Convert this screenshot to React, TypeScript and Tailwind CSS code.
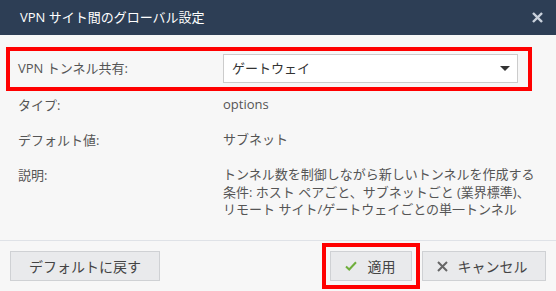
import React from 'react';

const font = { fontFamily: '"Open Sans", "Noto Sans CJK JP", sans-serif' };

const rows = [
  { label: 'タイプ:', value: ['options'] },
  { label: 'デフォルト値:', value: ['サブネット'] },
  {
    label: '説明:',
    value: [
      'トンネル数を制御しながら新しいトンネルを作成する',
      '条件: ホスト ペアごと、サブネットごと (業界標準)、',
      'リモート サイト/ゲートウェイごとの単一トンネル',
    ],
  },
];

export default function App() {
  return (
    <div className="w-[556px] h-[291px] bg-[#f7f7f7] flex flex-col overflow-hidden" style={font}>
      <div className="h-[35px] bg-[#2d3e55] flex items-center justify-between pl-5 pr-[13px] shrink-0">
        <span className="text-white text-[13px]">VPN サイト間のグローバル設定</span>
        <svg className="w-[11px] h-[11px] text-[#c9d1dc]" viewBox="0 0 12 12" fill="none" stroke="currentColor">
          <path d="M2 2l8 8M10 2l-8 8" strokeWidth={2.6} strokeLinecap="square" />
        </svg>
      </div>

      <div className="flex flex-col pl-[6px] pr-[24px] pt-[12px]">
        <div className="border-4 border-[#ff0000] flex items-center h-[44px] pl-2 pr-[10px] pb-[1px]">
          <span className="w-[205px] text-[13px] text-[#555]">VPN トンネル共有:</span>
          <div className="flex-1 h-[29px] bg-white border border-[#ccc] flex items-center justify-between pl-[8px] pr-[7px]">
            <span className="text-[13px] text-[#333]">ゲートウェイ</span>
            <svg className="w-[10px] h-[5px] text-[#333]" viewBox="0 0 10 5" fill="currentColor">
              <path d="M0 0h10L5 5z" />
            </svg>
          </div>
        </div>
      </div>

      <div className="flex flex-col gap-[17px] pl-[18px] pt-[5px] h-[149px]">
        {rows.map((r) => (
          <div key={r.label} className="flex text-[13px] leading-[18px] text-[#555]">
            <span className="w-[205px] shrink-0">{r.label}</span>
            <div className="flex flex-col leading-[17.5px]">
              {r.value.map((v) => (
                <span key={v}>{v}</span>
              ))}
            </div>
          </div>
        ))}
      </div>

      <div className="h-px bg-[#dfe2e7]" />

      <div className="flex items-center justify-between px-[10px] pt-[10px]">
        <button className="w-[150px] h-[30px] bg-[#e9eaec] border border-[#cfd1d4] text-[14px] text-[#444]">
          デフォルトに戻す
        </button>
        <div className="flex gap-[10px]">
          <div className="relative">
            <div className="absolute -inset-2 border-4 border-[#ff0000]" />
            <button className="w-[82px] h-[30px] bg-[#e9eaec] border border-[#cfd1d4] text-[14px] text-[#444] flex items-center justify-center gap-[11px] pr-[2px]">
              <svg className="w-[12px] h-[10px]" viewBox="0 0 12 10" fill="none" stroke="#6fae3c">
                <path d="M1 5.5l3.2 3L11 1.2" strokeWidth={2} />
              </svg>
              <span>適用</span>
            </button>
          </div>
          <button className="w-[124px] h-[30px] bg-[#e9eaec] border border-[#cfd1d4] text-[14px] text-[#444] flex items-center justify-center gap-[10px] pr-[4px]">
            <svg className="w-[11px] h-[11px]" viewBox="0 0 11 11" fill="none" stroke="#666">
              <path d="M1 1l9 9M10 1l-9 9" strokeWidth={2} />
            </svg>
            <span>キャンセル</span>
          </button>
        </div>
      </div>
    </div>
  );
}
